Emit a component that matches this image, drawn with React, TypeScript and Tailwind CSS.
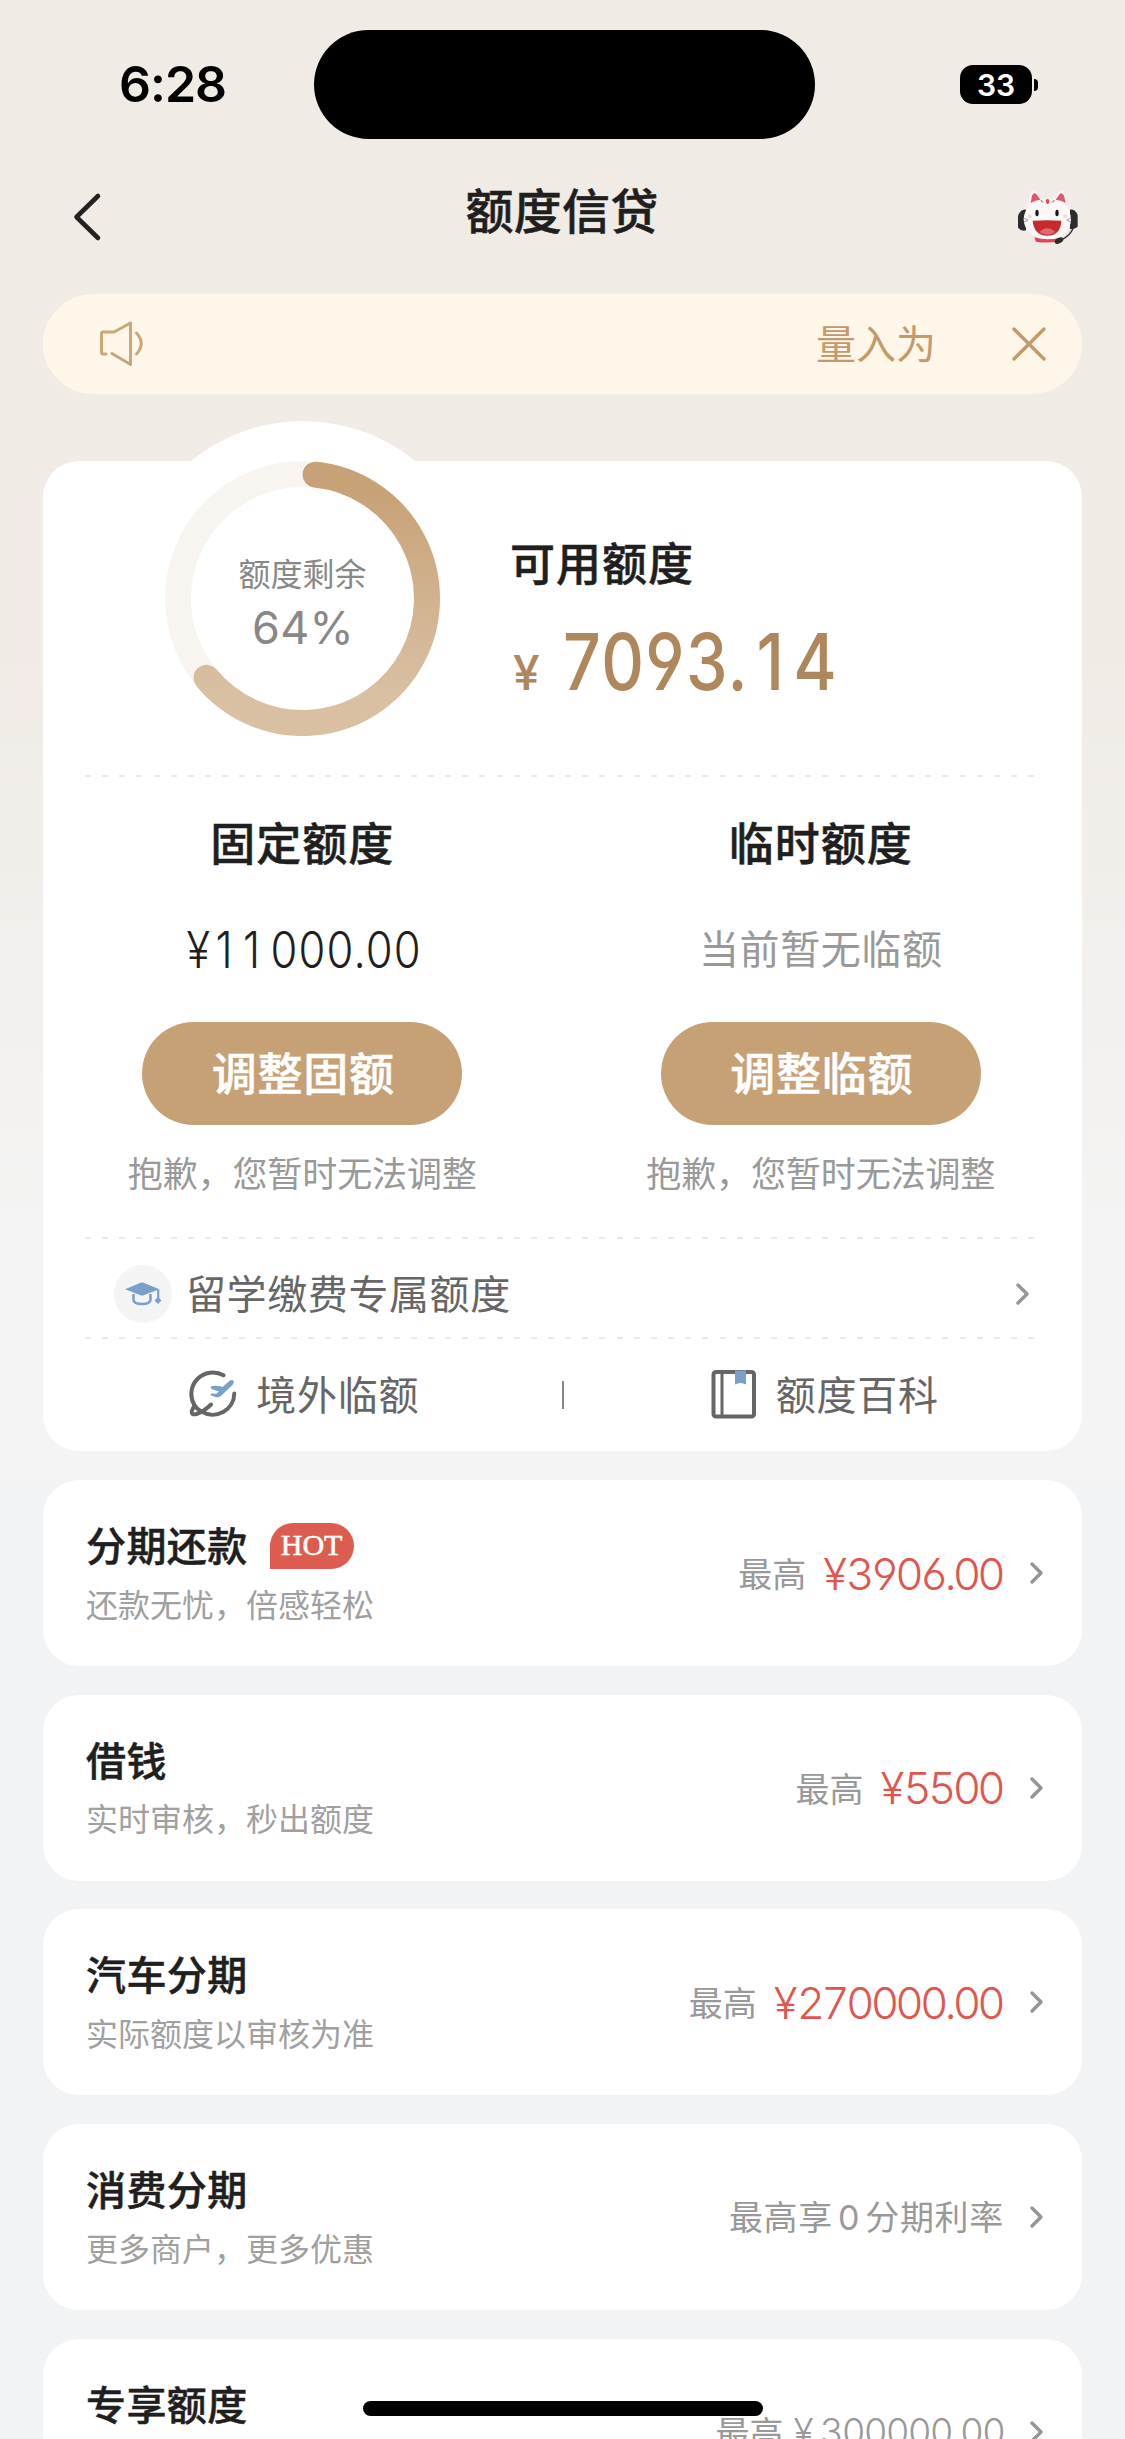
import type { ReactNode } from "react";

interface Product {
  title: string;
  desc?: string;
  hot?: boolean;
  right: ReactNode;
}

const RING_CENTER = 137.5;
const RING_RADIUS = 124.5;

function pointOnRing(deg: number) {
  const rad = ((deg - 90) * Math.PI) / 180;
  return `${RING_CENTER + RING_RADIUS * Math.cos(rad)} ${RING_CENTER + RING_RADIUS * Math.sin(rad)}`;
}

function Chevron() {
  return (
    <svg width="16" height="24" viewBox="0 0 16 24" fill="none" className="shrink-0">
      <path d="M3 3 L12 12 L3 21" stroke="#959595" strokeWidth="3.4" strokeLinecap="round" strokeLinejoin="round" />
    </svg>
  );
}

function Mascot() {
  return (
    <svg width="65" height="57" viewBox="105 48 195 171">
      <path d="M114 128 Q122 108 138 110 L138 172 Q124 176 114 164Z" fill="#2b2c2e" />
      <path d="M293 126 Q285 108 270 110 L270 168 Q286 170 293 160Z" fill="#2b2c2e" />
      <path d="M138 114 L150 64 Q156 46 171 58 L190 80 L216 80 L236 57 Q249 46 255 62 L267 112Z" fill="#f8f3f2" />
      <ellipse cx="202" cy="139" rx="71" ry="61" fill="#fbf8f7" />
      <path d="M152 90 L156 68 Q160 56 169 63 L181 80 Q164 81 152 90Z" fill="#e0566a" />
      <path d="M257 90 L252 68 Q247 56 239 63 L227 80 Q244 81 257 90Z" fill="#e0566a" />
      <path d="M197 82 Q203 74 208 82 Q209 90 203 94 Q197 90 197 82Z" fill="#dd4a5c" />
      <path d="M181 80 Q188 82 191 89 Q184 88 181 80Z M225 80 Q218 82 215 89 Q222 88 225 80Z" fill="#dd4a5c" />
      <ellipse cx="171" cy="120" rx="5" ry="10" fill="#15171a" />
      <ellipse cx="231" cy="120" rx="5" ry="10" fill="#15171a" />
      <circle cx="149" cy="130" r="6" fill="#f8d5d8" />
      <circle cx="256" cy="130" r="6" fill="#f8d5d8" />
      <path d="M131 136 L144 140 M132 146 L144 143 M273 136 L260 140 M272 146 L260 143" stroke="#777" strokeWidth="2" />
      <path d="M158 143 Q202 141 244 143 Q242 187 202 188 Q162 187 158 143Z" fill="#c62a2e" />
      <path d="M178 177 Q202 154 226 177 Q204 194 178 177Z" fill="#dd6a72" />
      <path d="M163 193 Q202 204 240 194 L236 205 Q202 212 168 206Z" fill="#dd4456" />
      <path d="M280 164 Q272 186 244 201" stroke="#2b2c2e" strokeWidth="4" fill="none" />
      <ellipse cx="237" cy="203" rx="14" ry="8" transform="rotate(-28 237 203)" fill="#2b2c2e" />
    </svg>
  );
}

function SpeakerIcon() {
  return (
    <svg width="50" height="50" viewBox="0 0 50 50" fill="none" stroke="#cba678" strokeWidth="3" strokeLinecap="round" strokeLinejoin="round">
      <path d="M9 35 H6 Q4.500 35 4.500 33 V14.500 Q4.500 13 6 13 H17 L33.500 4 V45.500 L15 34.500" />
      <path d="M39.500 14 Q49 24.500 39.500 35" />
    </svg>
  );
}

function CapIcon() {
  return (
    <svg width="38" height="26" viewBox="0 0 38 26" fill="none">
      <path d="M1 8.300 L16.500 1.800 Q18 1.200 19.500 1.800 L35.500 8.300 L19.500 14.200 Q18 14.800 16.500 14.200Z" fill="#7b9fcb" />
      <path d="M9.500 13 V18.500 Q9.500 23 18 23 Q26.500 23 26.500 18.500 V13" stroke="#7b9fcb" strokeWidth="2.600" />
      <path d="M34.200 8.500 V18" stroke="#7b9fcb" strokeWidth="2.200" />
      <path d="M34 16 L37.500 19.500 L34 23 L30.500 19.500Z" fill="#7b9fcb" />
    </svg>
  );
}

function PlaneIcon() {
  return (
    <svg width="48" height="49" viewBox="0 0 48 49" fill="none">
      <g stroke="#666" strokeWidth="4" strokeLinecap="round" strokeLinejoin="round">
        <path d="M34.500 5.300 A21.500 21.500 0 0 0 5.500 35.200 L2.800 41 Q2 45.500 7.500 44 Q15 41.500 22 34.500" />
        <path d="M12.500 41.500 A21.500 21.500 0 0 0 45.300 23.500" />
        <path d="M5.500 35.200 Q8 39.500 12.500 41.500" />
      </g>
      <path
        d="M21.500 16.500 Q27 14.800 33.500 17 L40 11.200 Q43 9 44.700 11 Q45.500 13.500 43 15.500 L34.500 23.500 Q31 28 26.500 27 L21.500 25.200 L22 23.500 L27.500 23.800 L30 21.500 L22.500 19Z"
        fill="#7b9fcb"
      />
    </svg>
  );
}

function BookIcon() {
  return (
    <svg width="46" height="49" viewBox="0 0 46 49" fill="none">
      <rect x="2.500" y="2" width="40.500" height="44.500" rx="2.500" stroke="#666" strokeWidth="4" />
      <path d="M11 2 V46" stroke="#666" strokeWidth="3" />
      <path d="M24 0.500 H35 V14.500 Q29.500 11.500 24 14.500Z" fill="#7b9fcb" />
    </svg>
  );
}

function Dashes() {
  return (
    <div className="mx-[42px] h-[2px] shrink-0 bg-[repeating-linear-gradient(90deg,#e9e9e9_0_6px,transparent_6px_17.150px)]" />
  );
}

function Amount({ children }: { children: ReactNode }) {
  return (
    <span className="mr-[2px] ml-[17px] pt-[1px] font-['Inter',sans-serif] text-[44px] leading-none font-[350] tracking-[-3.800px] text-[#e0564f] [font-feature-settings:'tnum','cv03','cv04']">
      <span className="tracking-[-1px]">¥</span>
      {children}
    </span>
  );
}

function QuotaColumn({ title, value, action }: { title: string; value: ReactNode; action: string }) {
  return (
    <div className="flex flex-1 flex-col items-center">
      <h3 className="mt-[42px] h-[46px] text-[45px] leading-none font-medium tracking-[1px] text-[#1f1f1f] [-webkit-text-stroke:0.500px]">{title}</h3>
      <div className="mt-[61px] flex h-[44px] items-center">{value}</div>
      <button className="mt-[52px] flex h-[103px] w-[320px] items-center justify-center rounded-full bg-[#c7a176] pb-[4px] pl-[2px] text-[45px] leading-none font-medium tracking-[0.800px] text-white [-webkit-text-stroke:0.500px]">
        {action}
      </button>
      <p className="mt-[29px] text-[35px] leading-none tracking-[-0.100px] text-[#999]">抱歉，您暂时无法调整</p>
    </div>
  );
}

function ProductCard({ title, desc, hot, right }: Product) {
  return (
    <div className="flex h-[186px] shrink-0 items-center justify-between rounded-[36px] bg-white pr-[37px] pl-[43px]">
      <div className="pb-[6px]">
        <div className="flex h-[46px] items-center">
          <h3 className="pb-[1px] text-[40px] leading-none font-medium tracking-[0.400px] text-[#1f1f1f] [-webkit-text-stroke:0.500px]">{title}</h3>
          {hot && (
            <span className="mt-[2px] ml-[22px] flex h-[46px] w-[84px] items-center justify-center rounded-[23px] rounded-bl-none bg-[#dc5d50] pb-[1px] font-['Liberation_Serif',serif] text-[30px] leading-none text-white [-webkit-text-stroke:0.600px]">
              HOT
            </span>
          )}
        </div>
        <p className="mt-[19px] h-[32px] text-[32px] leading-none text-[#a0a0a0]">{desc}</p>
      </div>
      <div className="flex items-center text-[34px] leading-none text-[#999]">
        {right}
        <span className="ml-[25px] flex">
          <Chevron />
        </span>
      </div>
    </div>
  );
}

const products: Product[] = [
  { title: "分期还款", desc: "还款无忧，倍感轻松", hot: true, right: <>最高<Amount>3906.00</Amount></> },
  { title: "借钱", desc: "实时审核，秒出额度", right: <>最高<Amount>5500</Amount></> },
  { title: "汽车分期", desc: "实际额度以审核为准", right: <>最高<Amount>270000.00</Amount></> },
  {
    title: "消费分期",
    desc: "更多商户，更多优惠",
    right: (
      <span className="tracking-[0.700px]">
        最高享<span className="mx-[5px] font-['Inter',sans-serif]">0</span>分期利率
      </span>
    ),
  },
  {
    title: "专享额度",
    right: (
      <>
        最高
        <span className="ml-[10px] font-['Inter',sans-serif] text-[37px] font-light tracking-[-1.900px] tabular-nums">¥ 300000.00</span>
      </>
    ),
  },
];

export default function App() {
  return (
    <div className="relative flex h-[2439px] w-[1125px] flex-col overflow-hidden bg-[#f2f3f5] font-['Noto_Sans_CJK_SC',sans-serif]">
      <div className="flex h-[1480px] shrink-0 flex-col bg-[linear-gradient(180deg,#f0ebe5_0px,#f0ebe5_660px,#f4f4f4_1240px)]">
        {/* status bar */}
        <div className="flex h-[169px] items-center pl-[119px]">
          <span className="w-[195px] pb-[1px] font-['Inter',sans-serif] text-[50px] leading-none font-semibold tracking-[-1px] text-black">6:28</span>
          <div className="h-[109px] w-[501px] rounded-full bg-black" />
          <div className="ml-[145px] flex h-[39px] w-[72px] items-center justify-center rounded-[13px] bg-black font-['Inter',sans-serif] text-[30px] leading-none font-semibold text-white">
            33
          </div>
          <div className="ml-[2px] h-[12px] w-[4px] rounded-r-full bg-black" />
        </div>

        {/* nav bar */}
        <div className="flex h-[96px] items-center justify-between pr-[45px] pl-[70px]">
          <svg width="32" height="52" viewBox="0 0 32 52" fill="none" className="mr-[7px]">
            <path d="M28 5 L6.500 26 L28 47" stroke="#222" strokeWidth="4.600" strokeLinecap="round" strokeLinejoin="round" />
          </svg>
          <h1 className="pb-[18px] text-[48px] leading-none font-medium tracking-[0.300px] text-[#1f1f1f] [-webkit-text-stroke:0.500px]">额度信贷</h1>
          <Mascot />
        </div>

        {/* notice */}
        <div className="mx-[43px] mt-[29px] flex h-[100px] items-center rounded-full bg-[#fef7e9] pl-[54px]">
          <SpeakerIcon />
          <span className="ml-auto pb-[4px] text-[40px] leading-none text-[#c39a6b]">量入为</span>
          <svg width="36" height="36" viewBox="0 0 36 36" className="mr-[35px] ml-[75px]">
            <path d="M3 3 L33 33 M33 3 L3 33" stroke="#c39a6b" strokeWidth="3.400" strokeLinecap="round" />
          </svg>
        </div>

        {/* quota card */}
        <div className="relative mx-[43px] mt-[67px] flex h-[990px] flex-col rounded-[36px] bg-white">
          <div className="absolute top-[-40px] left-[83px] size-[354px] rounded-full bg-white" />
          <div className="relative flex h-[314px]">
            <div className="relative ml-[122px] size-[275px]">
              <svg width="275" height="275" viewBox="0 0 275 275" fill="none">
                <defs>
                  <linearGradient id="ring" x1="0" y1="0" x2="0" y2="275" gradientUnits="userSpaceOnUse">
                    <stop offset="0.100" stopColor="#c7a277" />
                    <stop offset="0.850" stopColor="#d9c0a3" />
                  </linearGradient>
                </defs>
                <circle cx={RING_CENTER} cy={RING_CENTER} r={RING_RADIUS} stroke="#f8f5f1" strokeWidth="26" />
                <path
                  d={`M${pointOnRing(6)} A${RING_RADIUS} ${RING_RADIUS} 0 1 1 ${pointOnRing(230.4)}`}
                  stroke="url(#ring)"
                  strokeWidth="26"
                  strokeLinecap="round"
                />
              </svg>
              <div className="absolute inset-0 flex flex-col items-center pt-[95px] text-[#888]">
                <span className="text-[32px] leading-none">额度剩余</span>
                <span className="mt-[17px] pl-[1px] font-['Inter',sans-serif] text-[45px] leading-none font-[370] tracking-[0.200px]">64%</span>
              </div>
            </div>
            <div className="ml-[70px] pt-[78px]">
              <h2 className="text-[45px] leading-none font-medium tracking-[1px] text-[#1f1f1f] [-webkit-text-stroke:0.500px]">可用额度</h2>
              <div className="mt-[39px] flex items-baseline font-['Inter',sans-serif] leading-none font-medium text-[#ae885c] [font-feature-settings:'cv03','cv04']">
                <span className="ml-[3px] w-[50px] text-[48px]">¥</span>
                <span className="inline-block origin-left scale-x-[0.850] text-[78px] tracking-[1.600px]">
                  7093.<span className="mx-[9px]">1</span>4
                </span>
              </div>
            </div>
          </div>
          <Dashes />
          <div className="flex h-[460px] pr-[2px]">
            <QuotaColumn
              title="固定额度"
              action="调整固额"
              value={
                <span className="inline-block scale-x-[0.870] pt-[3px] pl-[3px] font-['Inter',sans-serif] text-[50px] leading-none font-[350] tracking-[1.300px] text-[#1f1f1f] [font-feature-settings:'cv03','cv04']">
                  ¥<span className="ml-[5px] tracking-[12px]">11</span>000.00
                </span>
              }
            />
            <QuotaColumn
              title="临时额度"
              action="调整临额"
              value={<span className="pb-[3px] text-[40px] leading-none tracking-[0.600px] text-[#999]">当前暂无临额</span>}
            />
          </div>
          <Dashes />
          <div className="flex h-[98px] items-center pt-[12px] pr-[51px] pl-[71px]">
            <div className="flex size-[58px] items-center justify-center rounded-full bg-[#f4f4f4]">
              <CapIcon />
            </div>
            <span className="ml-[14px] pb-[4px] text-[40px] leading-none tracking-[0.600px] text-[#666]">留学缴费专属额度</span>
            <span className="ml-auto flex">
              <Chevron />
            </span>
          </div>
          <Dashes />
          <div className="flex flex-1 items-center pb-[1px] text-[40px] leading-none tracking-[0.700px] text-[#666]">
            <div className="flex flex-1 items-center justify-center pl-[4px]">
              <PlaneIcon />
              <span className="ml-[19px] pb-[4px]">境外临额</span>
            </div>
            <div className="h-[28px] w-[2px] bg-[#888]" />
            <div className="flex flex-1 items-center justify-center pl-[4px]">
              <BookIcon />
              <span className="ml-[19px] pb-[4px]">额度百科</span>
            </div>
          </div>
        </div>
      </div>

      {/* products */}
      <div className="flex flex-col gap-[28.700px] px-[43px]">
        {products.map((p) => (
          <ProductCard key={p.title} {...p} />
        ))}
      </div>

      {/* home indicator */}
      <div className="absolute top-[2401px] left-[363px] h-[15px] w-[400px] rounded-full bg-black" />
    </div>
  );
}
